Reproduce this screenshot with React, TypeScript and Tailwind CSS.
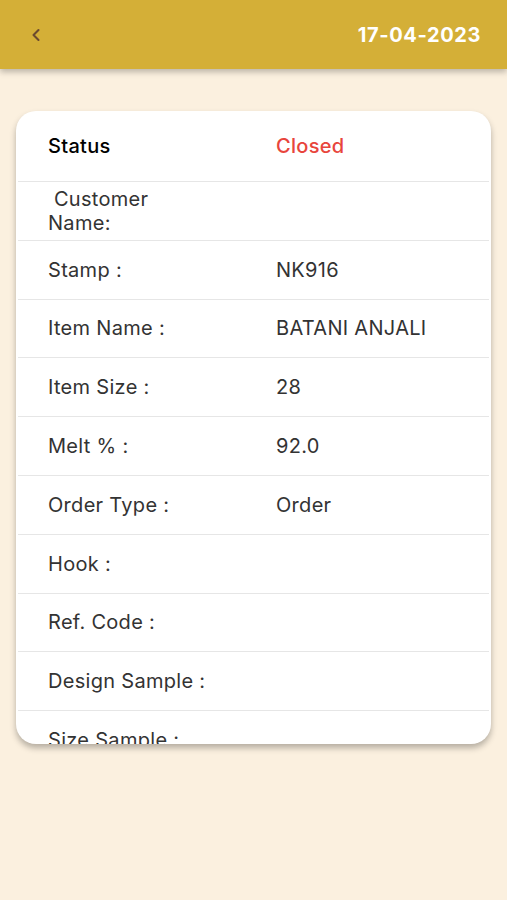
import { ChevronLeft } from 'lucide-react';

interface Row {
  label: string;
  value?: string;
  kind?: 'status';
}

const ROWS: Row[] = [
  { label: 'Status', value: 'Closed', kind: 'status' },
  { label: '\u00a0Customer\nName:' },
  { label: 'Stamp :', value: 'NK916' },
  { label: 'Item Name :', value: 'BATANI ANJALI' },
  { label: 'Item Size :', value: '28' },
  { label: 'Melt % :', value: '92.0' },
  { label: 'Order Type :', value: 'Order' },
  { label: 'Hook :' },
  { label: 'Ref. Code :' },
  { label: 'Design Sample :' },
  { label: 'Size Sample :' },
];

export default function App() {
  return (
    <div className="w-[507px] h-[900px] bg-[#fbf0df] font-['Inter','Noto_Sans',sans-serif] overflow-hidden">
      {/* Top bar */}
      <div className="h-[69px] bg-[#d4af37] flex items-center justify-between pl-[26px] pr-[26px] shadow-[0_3px_6px_rgba(0,0,0,0.25)] relative z-10">
        <ChevronLeft className="w-[20px] h-[20px] text-[#6b4a2e]" strokeWidth={2.5} />
        <span className="text-white font-bold text-[20px] tracking-[0.6px]">17-04-2023</span>
      </div>

      {/* Details card */}
      <div className="mt-[42px] mx-[16px] h-[633px] bg-white rounded-[20px] overflow-hidden shadow-[0_4px_6px_rgba(0,0,0,0.28)] px-[2px]">
        {ROWS.map((row, idx) => (
          <div
            key={idx}
            className={`${idx === 0 ? 'h-[71px]' : 'h-[58.8px]'} border-b border-[#e6e6e6] flex items-center shrink-0`}
          >
            <div className="w-[258px] pl-[30px]">
              <div
                className={`whitespace-pre-line text-[20px] leading-[24px] tracking-[0.3px] ${
                  row.kind === 'status' ? 'font-[550] text-black' : 'text-[#333]'
                }`}
              >
                {row.label}
              </div>
            </div>
            {row.value && (
              <div
                className={`text-[20px] leading-[24px] tracking-[0.3px] ${
                  row.kind === 'status' ? 'font-[550] text-[#e8453c]' : 'text-[#333]'
                }`}
              >
                {row.value}
              </div>
            )}
          </div>
        ))}
      </div>
    </div>
  );
}
